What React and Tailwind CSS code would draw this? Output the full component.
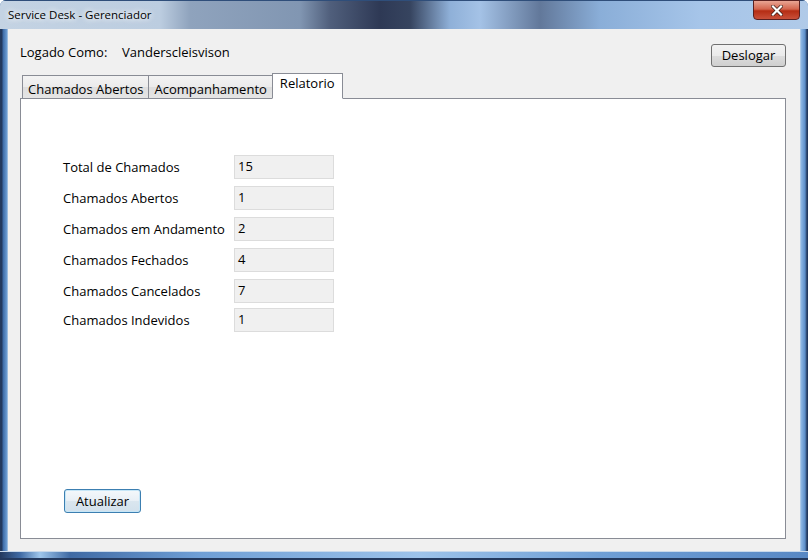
import React, { useState } from 'react';

const font = "font-['Open_Sans','Noto_Sans',sans-serif]";

const stats = [
  { label: 'Total de Chamados', value: '15', mt: 'mt-[56px]' },
  { label: 'Chamados Abertos', value: '1', mt: 'mt-[7px]' },
  { label: 'Chamados em Andamento', value: '2', mt: 'mt-[7px]' },
  { label: 'Chamados Fechados', value: '4', mt: 'mt-[7px]' },
  { label: 'Chamados Cancelados', value: '7', mt: 'mt-[7px]' },
  { label: 'Chamados Indevidos', value: '1', mt: 'mt-[5px]' },
];

const tabs = ['Chamados Abertos', 'Acompanhamento', 'Relatorio'];

const StatRow = ({ label, value, mt }) => (
  <div className={`flex items-center ${mt}`}>
    <span className="w-[171px] text-[13px] text-black leading-[16px]">{label}</span>
    <div className="w-[100px] h-[24px] bg-[#f0f0f0] border border-[#dcdcdc] flex items-center pl-[3px] text-[13px] text-black">
      {value}
    </div>
  </div>
);

const App = () => {
  const [active, setActive] = useState(2);

  return (
    <div className={`w-[808px] h-[560px] flex flex-col overflow-hidden rounded-t-[6px] bg-[#4a78b0] ${font}`}>
      {/* title bar */}
      <div className="h-[29px] flex items-start justify-between bg-[linear-gradient(90deg,#c4d3e3_0px,#bccde0_160px,#8fa3bd_190px,#8196b2_300px,#505f7c_330px,#2e3955_380px,#36445f_410px,#8fb0d8_450px,#a4c2e6_480px,#62789a_540px,#8aaed8_600px,#a6c5e9_700px,#b0cae8_808px)] border-t border-[#2f4e7a]">
        <span className="ml-[8px] mt-[6px] text-[11.5px] leading-[16px] text-black [text-shadow:0_0_6px_#fff,0_0_6px_#fff]">
          Service Desk - Gerenciador
        </span>
        <div className="mr-[8px] w-[47px] h-[20px] -mt-px rounded-b-[4px] border border-[#5a2020] bg-[linear-gradient(180deg,#e9a594_0%,#d4654e_45%,#b52d14_55%,#c9503a_100%)] flex items-center justify-center">
          <svg width="12" height="11" viewBox="0 0 12 11">
            <path d="M2 1.5 L10 9.5 M10 1.5 L2 9.5" stroke="#3a1a14" strokeWidth="3.6" strokeLinecap="square" />
            <path d="M2 1.5 L10 9.5 M10 1.5 L2 9.5" stroke="#ffffff" strokeWidth="2.2" strokeLinecap="square" />
          </svg>
        </div>
      </div>

      <div className="flex-1 flex">
        {/* left frame */}
        <div className="w-[8px] bg-[linear-gradient(90deg,#23395e_0px,#23395e_2px,#3c6aa6_3px,#6e9ed4_7px,#c9d9ea_8px)]" />

        {/* client */}
        <div className="flex-1 flex flex-col bg-[#f0f0f0] pl-[12px] pr-[14px] pb-[12px]">
          <div className="flex items-start justify-between pt-[15px]">
            <div className="flex text-[13px] leading-[16px] text-black">
              <span className="w-[102px]">Logado Como:</span>
              <span>Vanderscleisvison</span>
            </div>
            <button className="w-[75px] h-[23px] rounded-[3px] border border-[#707070] bg-[linear-gradient(180deg,#f2f2f2_0%,#ebebeb_50%,#dddddd_51%,#cfcfcf_100%)] text-[13px] text-black leading-none">
              Deslogar
            </button>
          </div>

          {/* tab strip */}
          <div className="mt-[6px] h-[25px] flex items-end pl-[2px] relative z-10">
            {tabs.map((t, i) => {
              const sel = i === active;
              return (
                <button
                  key={t}
                  onClick={() => setActive(i)}
                  className={
                    sel
                      ? 'h-[26px] -mb-px px-[7px] bg-white border border-[#898c95] border-b-white text-[13px] text-black leading-[16px] pb-[6px]'
                      : 'h-[23px] px-[5px] -mr-px bg-[linear-gradient(180deg,#f3f3f3_0%,#ebebeb_50%,#dedede_51%,#e5e5e5_100%)] border border-b-0 border-[#898c95] text-[13px] text-black leading-[16px] pt-[3px]'
                  }
                >
                  {t}
                </button>
              );
            })}
          </div>

          {/* panel */}
          <div className="flex-1 bg-white border border-[#898c95] flex flex-col pl-[42px] pb-[25px]">
            {stats.map((s) => (
              <StatRow key={s.label} {...s} />
            ))}
            <div className="flex-1" />
            <button className="ml-px w-[77px] h-[24px] rounded-[3px] border border-[#3c7fb1] bg-[linear-gradient(180deg,#f4f8fb_0%,#e8eff5_50%,#dae6ef_51%,#d2e1ec_100%)] text-[13px] text-black leading-none shadow-[inset_0_0_0_1px_#c6e6f7]">
              Atualizar
            </button>
          </div>
        </div>

        {/* right frame */}
        <div className="w-[8px] bg-[linear-gradient(90deg,#c9d9ea_0px,#8fb8e4_1px,#5d8fca_5px,#23395e_7px)]" />
      </div>

      {/* bottom frame */}
      <div className="h-[9px] relative bg-[linear-gradient(90deg,#23395e_0px,#3f6aa4_20px,#9ec6ec_40px,#3f6aa4_70px,#6f9fd6_200px,#9dc3ea_420px,#6f9fd6_600px,#5888c4_808px)] border-t border-[#c9d9ea]">
        <div className="absolute left-0 right-0 bottom-0 h-[2px] bg-[#23395e]" />
      </div>
    </div>
  );
};

export default App;
